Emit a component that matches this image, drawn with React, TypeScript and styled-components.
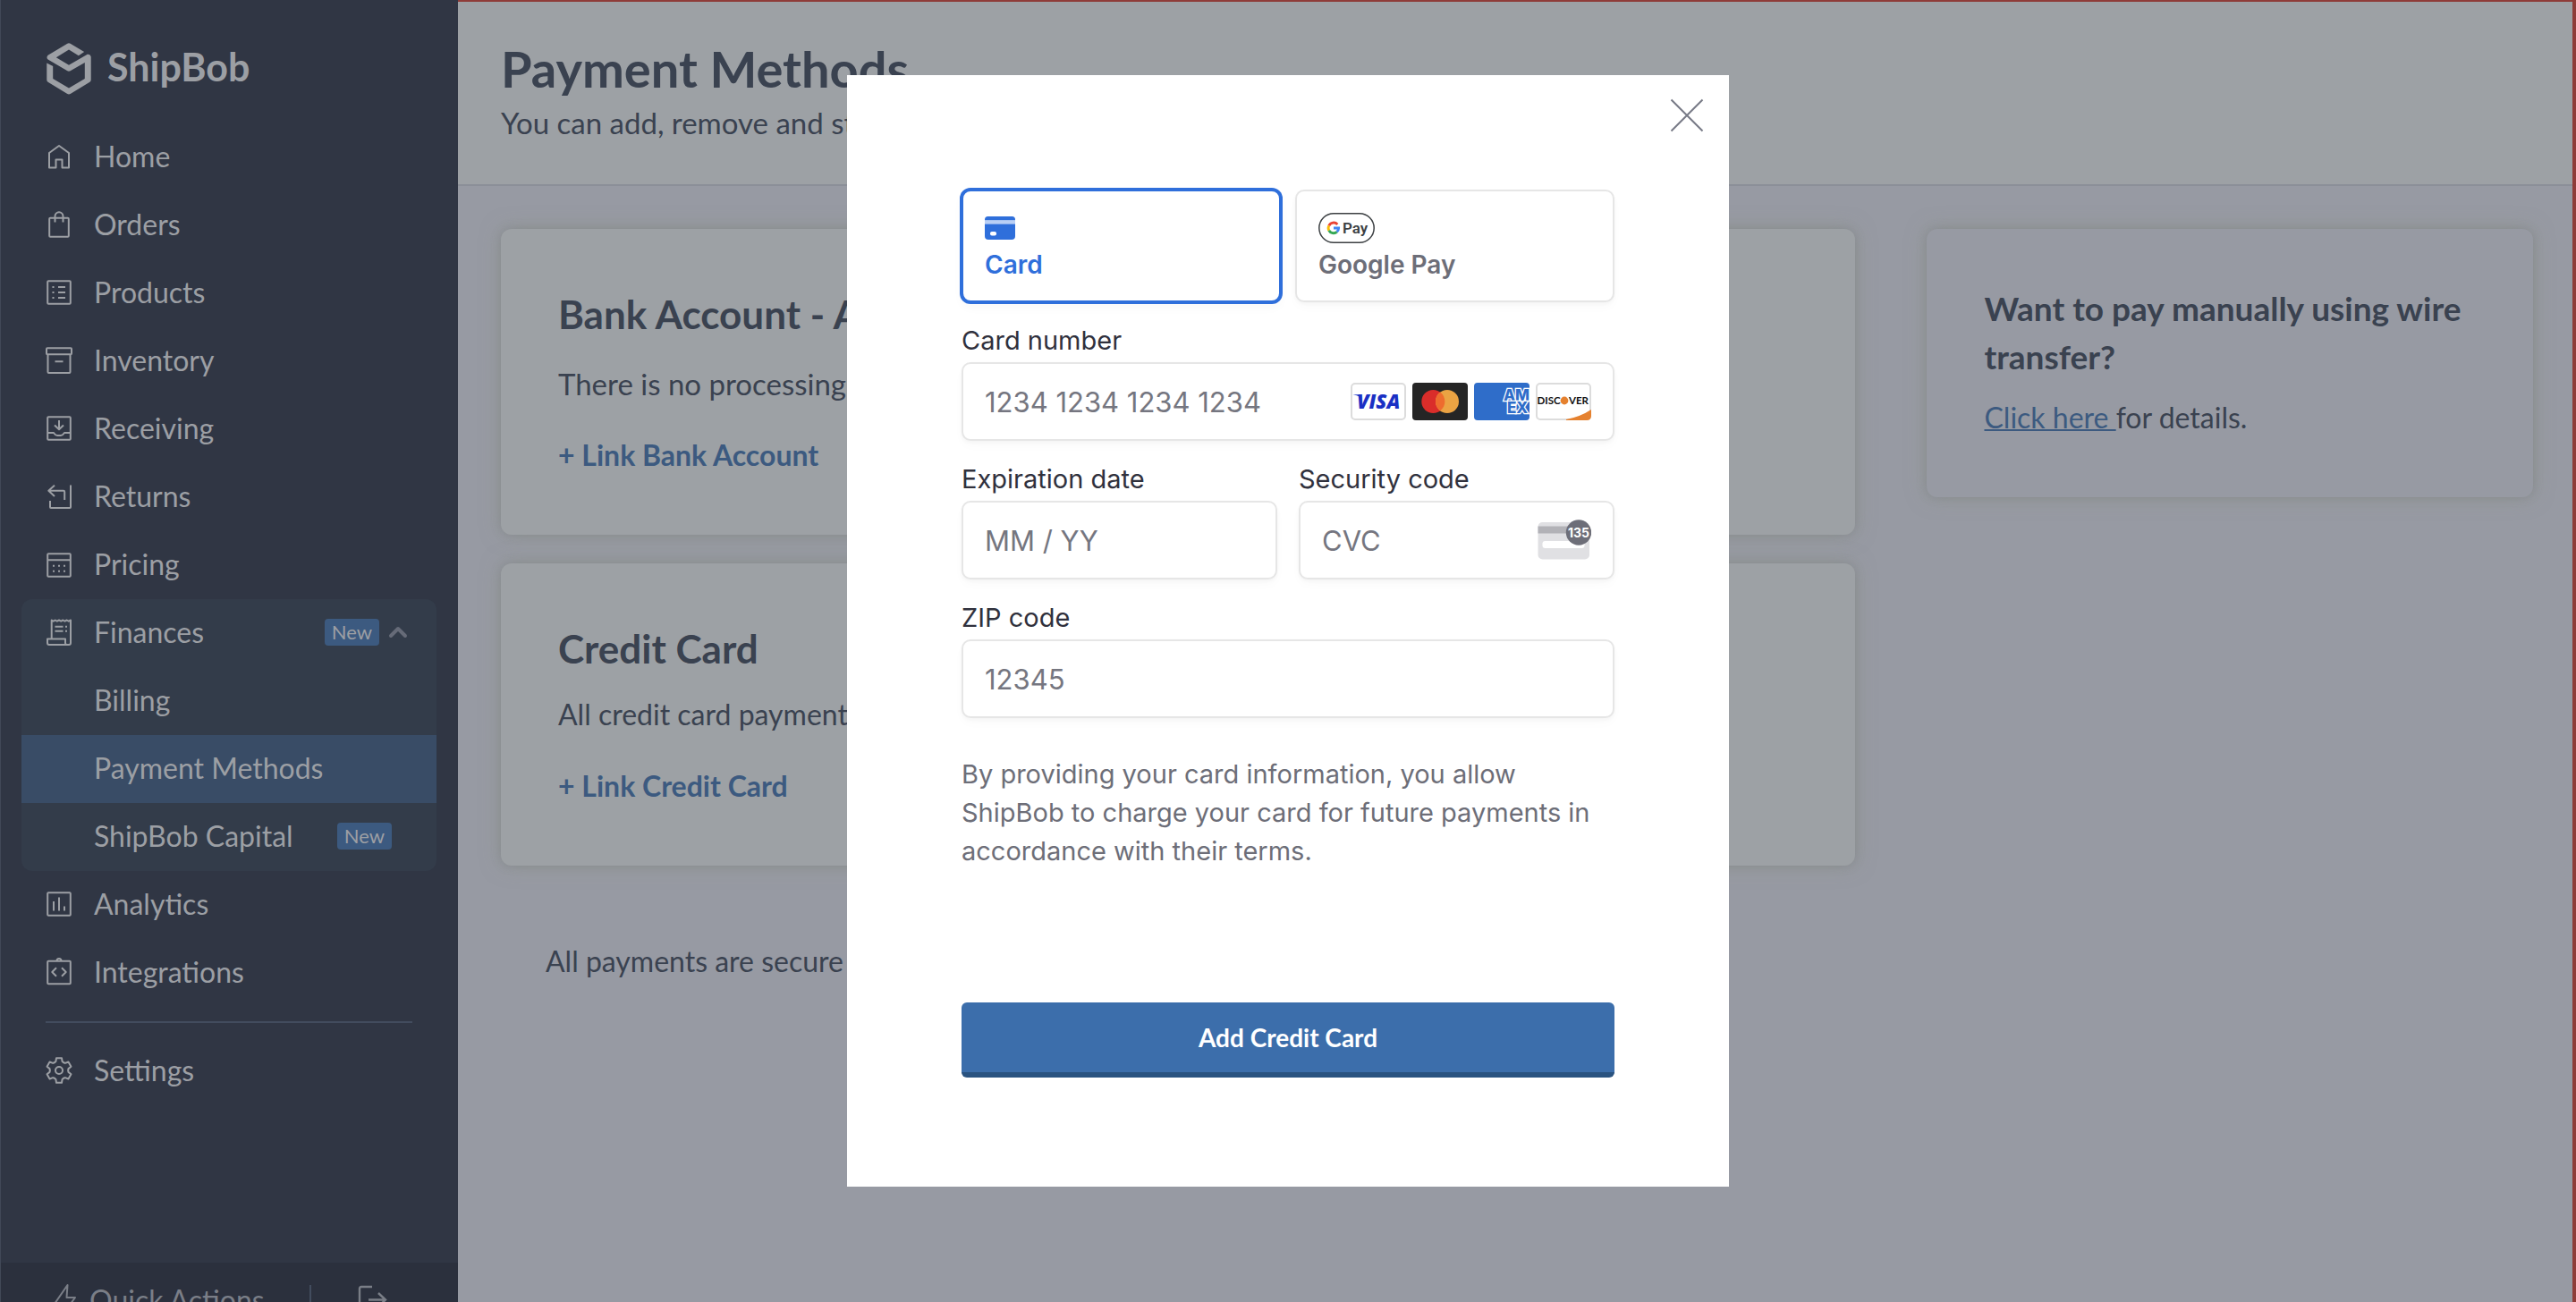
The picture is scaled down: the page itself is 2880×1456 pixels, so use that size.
import React from "react";
import styled, { createGlobalStyle, css } from "styled-components";

const brand = `Lato, "Open Sans", sans-serif`;
const form = `Inter, Roboto, sans-serif`;

const color = {
  nav: "#303644",
  navGroup: "#333c4a",
  navActive: "#394c66",
  navFooter: "#2b303d",
  navText: "#9c9fa4",
  navMuted: "#7a7e87",
  line: "#424c5e",
  page: "#979aa3",
  surface: "#9da1a5",
  ink: "#3a4250",
  link: "#3c5a80",
  alert: "#8f3c39",
};

const GlobalStyle = createGlobalStyle`
  *, *::before, *::after { box-sizing: border-box; }
  body { margin: 0; background: ${color.page}; font-family: ${brand}; }
  h1, h2, h3, p { margin: 0; padding: 0; }
  button, input { font-family: inherit; }
`;

/* ---------- shell ---------- */

const Shell = styled.div`
  display: flex;
  height: 100vh;
  overflow: hidden;
`;

const Sidebar = styled.aside`
  display: flex;
  flex-direction: column;
  flex: 0 0 512px;
  height: calc(100vh + 40px);
  background: ${color.nav};
  border-left: 1px solid #414857;
  color: ${color.navText};
`;

const Brand = styled.a`
  display: flex;
  align-items: center;
  gap: 18px;
  height: 138px;
  padding: 16px 51px 0;
  color: inherit;
  font-size: 43px;
  font-weight: 700;
  line-height: 50px;
  text-decoration: none;
`;

const BrandName = styled.span`
  padding-bottom: 4px;
`;

const Nav = styled.nav`
  flex: 1;
  padding: 0 24px 0 23px;
`;

const NavGroup = styled.div`
  border-radius: 12px;
  background: ${color.navGroup};
`;

const NavLink = styled.a<{ $active?: boolean; $sub?: boolean }>`
  display: flex;
  align-items: center;
  gap: 24px;
  height: 76px;
  padding: 0 32px 3px ${(p) => (p.$sub ? 81 : 27)}px;
  background: ${(p) => (p.$active ? color.navActive : "transparent")};
  color: inherit;
  font-size: 32px;
  text-decoration: none;
  svg { flex: none; }
`;

const Badge = styled.span<{ $inset?: boolean }>`
  margin-left: auto;
  margin-right: ${(p) => (p.$inset ? 18 : 0)}px;
  padding: 0 8px;
  border-radius: 4px;
  background: ${color.link};
  font-size: 22px;
  line-height: 30px;
`;

const Chevron = styled.svg`
  margin-left: -14px;
`;

const NavDivider = styled.hr`
  height: 2px;
  margin: 16px 27px;
  border: 0;
  background: ${color.line};
`;

const NavFooter = styled.div`
  display: flex;
  align-items: center;
  height: 84px;
  padding: 0 0 2px 58px;
  background: ${color.navFooter};
  color: ${color.navMuted};
`;

const FooterButton = styled.button`
  display: flex;
  align-items: center;
  gap: 13px;
  padding: 0;
  border: 0;
  background: none;
  color: inherit;
  font-size: 32px;
`;

const FooterSplit = styled.span`
  width: 2px;
  height: 32px;
  margin: 0 52px 0 50px;
  background: ${color.line};
`;

/* ---------- page ---------- */

const Main = styled.main`
  flex: 1;
  min-width: 0;
  border-top: 2px solid ${color.alert};
  border-right: 4px solid ${color.alert};
  background: ${color.page};
  color: ${color.ink};
`;

const PageHeader = styled.header`
  padding: 45px 48px 49px;
  border-bottom: 2px solid #8b8f98;
  background: ${color.surface};
`;

const PageTitle = styled.h1`
  font-size: 56px;
  font-weight: 700;
  line-height: 60px;
`;

const Lead = styled.p`
  margin-top: 10px;
  font-size: 33px;
  line-height: 40px;
`;

const Columns = styled.div`
  display: grid;
  grid-template-columns: 38fr 17fr;
  align-items: start;
  gap: 80px;
  padding: 48px 44px 48px 48px;
`;

const Stack = styled.div`
  display: flex;
  flex-direction: column;
  gap: 32px;
`;

const Panel = styled.section<{ $flat?: boolean }>`
  padding: ${(p) => (p.$flat ? 62 : 65)}px 64px 67px;
  border-radius: 12px;
  background: ${(p) => (p.$flat ? color.page : color.surface)};
  box-shadow: 0 0 12px rgba(90, 94, 104, 0.28), 0 0 22px rgba(150, 155, 140, 0.5);
`;

const PanelTitle = styled.h2<{ $gap: number }>`
  margin-bottom: ${(p) => p.$gap}px;
  font-size: 44px;
  line-height: 60px;
  white-space: nowrap;
`;

const SideTitle = styled.h3`
  margin-bottom: 19px;
  font-size: 37px;
  line-height: 54px;
`;

const Body = styled.p<{ $large?: boolean }>`
  font-size: ${(p) => (p.$large ? 33 : 32)}px;
  line-height: 44px;
`;

const LinkButton = styled.button`
  display: block;
  margin-top: 36px;
  padding: 0;
  border: 0;
  background: none;
  color: ${color.link};
  font-size: 32px;
  font-weight: 700;
  line-height: 44px;
`;

const Note = styled(Body)`
  padding: 53px 50px 0;
`;

const TextLink = styled.a`
  color: ${color.link};
  text-decoration: underline;
  text-decoration-thickness: 2px;
  white-space: pre;
`;

/* ---------- dialog ---------- */

const Scrim = styled.div`
  position: fixed;
  inset: 0;
  display: flex;
  justify-content: center;
  align-items: flex-start;
  padding-top: 84px;
`;

const Dialog = styled.div`
  position: relative;
  width: 986px;
  padding: 128px 128px 122px;
  background: #fff;
  font-family: ${form};
`;

const Close = styled.button`
  position: absolute;
  top: 24px;
  right: 26px;
  display: flex;
  padding: 0;
  border: 0;
  background: none;
`;

const Fields = styled.form`
  display: flex;
  flex-direction: column;
  gap: 24px;
`;

const Row = styled.div<{ $gap: number }>`
  display: grid;
  grid-template-columns: repeat(2, minmax(0, 1fr));
  gap: ${(p) => p.$gap}px;
`;

const boxed = css`
  border: 2px solid #e6e6e6;
  border-radius: 10px;
  background: #fff;
  box-shadow: 0 2px 4px rgba(0, 0, 0, 0.03), 0 6px 12px rgba(0, 0, 0, 0.02);
`;

const Method = styled.button<{ $on?: boolean }>`
  ${boxed}
  display: flex;
  flex-direction: column;
  align-items: flex-start;
  height: 126px;
  padding: 22px 24px;
  color: #6d6e78;
  font-size: 28px;
  font-weight: 600;
  line-height: 36px;
  ${(p) =>
    p.$on &&
    css`
      border-color: #2f6fdb;
      box-shadow: 0 0 0 2px #2f6fdb, 0 6px 12px rgba(0, 0, 0, 0.03);
      color: #2f6fdb;
    `}
`;

const MethodIcon = styled.span`
  display: flex;
  align-items: center;
  height: 38px;
  margin-bottom: 4px;
`;

const Field = styled.div`
  display: flex;
  flex-direction: column;
`;

const Label = styled.label`
  margin-bottom: 6px;
  color: #30313d;
  font-size: 29px;
  line-height: 37px;
`;

const Control = styled.div`
  ${boxed}
  display: flex;
  align-items: center;
  gap: 7px;
  height: 88px;
  padding: 0 24px;
  svg { flex: none; }
`;

const Input = styled.input`
  flex: 1;
  min-width: 0;
  padding: 0;
  border: 0;
  outline: 0;
  background: none;
  color: #30313d;
  font-size: 31px;
  &::placeholder { color: #757680; opacity: 1; }
`;

const Terms = styled.p`
  margin-top: 17px;
  color: #6d6e78;
  font-size: 29px;
  line-height: 43px;
`;

const Submit = styled.button`
  height: 84px;
  margin-top: 124px;
  padding: 0;
  border: 0;
  border-bottom: 6px solid #2a5380;
  border-radius: 6px;
  background: #3c6eab;
  color: #fff;
  font-family: ${brand};
  font-size: 28px;
  font-weight: 700;
`;

/* ---------- drawings ---------- */

const gearPath = (() => {
  const tooth: [number, number][] = [
    [-5.4, -8.6],
    [-3.6, -10],
    [-3, -13.8],
    [3, -13.8],
    [3.6, -10],
    [5.4, -8.6],
  ];
  const points: string[] = [];
  for (let i = 0; i < 6; i++) {
    const a = (i * Math.PI) / 3;
    tooth.forEach(([x, y]) => {
      const px = 15 + x * Math.cos(a) - y * Math.sin(a);
      const py = 15 + x * Math.sin(a) + y * Math.cos(a);
      points.push(`${px.toFixed(2)} ${py.toFixed(2)}`);
    });
  }
  return `M${points.join("L")}Z`;
})();

const icons: Record<string, React.ReactNode> = {
  home: <path d="M4 27.5V11L15 3l11 8v16.5h-7.5v-9h-7v9z" />,
  orders: (
    <>
      <rect x="4.2" y="7.7" width="21.6" height="21" rx="1" />
      <path d="M10.5 12.5V6a4.5 4.8 0 0 1 9 0v6.5" />
    </>
  ),
  products: (
    <>
      <rect x="2.2" y="2.2" width="25.6" height="25.6" rx="1" />
      <path d="M7.5 9h2M14 9h8M7.5 15h2M14 15h8M7.5 21h2M14 21h8" />
    </>
  ),
  inventory: (
    <>
      <rect x="1" y="1.2" width="28" height="7" rx="1" />
      <path d="M2.5 8.5V28q0 1 1 1h23q1 0 1-1V8.5M10.5 16.3h9" />
    </>
  ),
  receiving: (
    <>
      <rect x="2.2" y="2.2" width="25.6" height="25.6" rx="1" />
      <path d="M15 6v10M10 11.5l5 4.8 5-4.8M2.5 20h6.5q2 3 4 3h4q2 0 4-3h6.5" />
    </>
  ),
  returns: <path d="M10 2.8L3.3 8.7 10 15M3.5 8.7H20q1.2 0 1.2 1.2V19M28 2.5V27q0 1-1 1H6q-1 0-1-1v-7" />,
  pricing: (
    <>
      <rect x="2.2" y="3.2" width="25.6" height="25.6" rx="1" />
      <path d="M2.2 10.2h25.6M8 16.7h2M14 16.7h2M20 16.7h2M8 22.7h2M14 22.7h2M20 22.7h2" />
    </>
  ),
  finances: (
    <>
      <path d="M6.7 22V1.5l2 1.2 2-1.2 2.1 1.2 2.2-1.2 2.2 1.2 2.2-1.2 2.1 1.2 2.2-1.2 2 1.2L28 1.5V27q0 2-2 2H4q-2 0-2-2v-4.5h20V27q0 2 2 2" />
      <path d="M10.5 8.7h9M10.5 13.7h9M22 8.7h2M22 13.7h2" />
    </>
  ),
  analytics: (
    <>
      <rect x="2.2" y="2.2" width="25.6" height="25.6" rx="1" />
      <path d="M9 12v10.5M15 7.5v15M21 17.5v5" />
    </>
  ),
  integrations: (
    <>
      <rect x="2.2" y="2.8" width="25.6" height="25.4" rx="1" />
      <path d="M12 10.3L7.3 15l4.7 4.7M18 10.3l4.7 4.7-4.7 4.7M12.5 2.5a2.5 2.5 0 0 1 5 0" />
    </>
  ),
  settings: (
    <>
      <path d={gearPath} />
      <circle cx="15" cy="15" r="4" />
    </>
  ),
};

const NavIcon = ({ name }: { name: string }) => (
  <svg width="30" height="30" viewBox="0 0 30 30" fill="none" stroke="currentColor" strokeWidth="2" strokeLinejoin="round" overflow="visible" aria-hidden="true">
    {icons[name]}
  </svg>
);

const Logo = () => (
  <svg width="50" height="58" viewBox="156 143 150 176" fill="currentColor" aria-hidden="true">
    <path d="M283 173L236 145Q231 142 226 145L160 185Q153 192 160 199L226 238Q231 241 236 238L285 210V264L231 296L177 264V222L156 211V268Q156 273 160 276L226 316Q231 319 236 316L302 276Q306 273 306 268V190Q304 180 294 182L231 218L188 192L231 166L264 186Z" />
  </svg>
);

const CardGlyph = () => (
  <svg width="34" height="26" viewBox="0 0 34 26" aria-hidden="true">
    <path d="M3.5 0h27Q34 0 34 3.5V4.5H0V3.5Q0 0 3.5 0Z" fill="#2f6fdb" />
    <path d="M0 4.5h34v4H0z" fill="#b9cff5" />
    <path d="M0 8.5h34V22q0 4-4 4H4q-4 0-4-4Z" fill="#2f6fdb" />
    <rect x="6" y="17" width="7" height="4.4" rx="2" fill="#fff" />
  </svg>
);

const GooglePayGlyph = () => (
  <svg width="63" height="34" viewBox="0 0 63 34" aria-hidden="true">
    <rect x="0.8" y="0.8" width="61.4" height="32.4" rx="16.2" fill="#fff" stroke="#3c4043" strokeWidth="1.5" />
    <g fill="none" strokeWidth="2.9">
      <path d="M21.3 12.9A5.8 5.8 0 0 0 11.8 14.3" stroke="#ea4335" />
      <path d="M11.8 14.3a5.8 5.8 0 0 0 0 5.4" stroke="#fbbc04" />
      <path d="M11.8 19.7a5.8 5.8 0 0 0 8.9 1.6" stroke="#34a853" />
      <path d="M20.7 21.3A5.8 5.8 0 0 0 22.6 17H17" stroke="#4285f4" />
    </g>
    <text x="27" y="23" fontFamily="Roboto, sans-serif" fontSize="17" fill="#3c4043">Pay</text>
  </svg>
);

const Visa = () => (
  <svg width="62" height="42" viewBox="0 0 62 42" role="img" aria-label="Visa">
    <rect x="1" y="1" width="60" height="40" rx="4" fill="#fff" stroke="#dcdcdc" strokeWidth="2" />
    <path d="M2.5 13.3h7.5l1 3Q7 13.8 2.5 13.3Z" fill="#1a30c4" />
    <text x="7" y="29" fontFamily="Open Sans, sans-serif" fontWeight="800" fontStyle="italic" fontSize="22" fill="#1a30c4">VISA</text>
  </svg>
);

const Mastercard = () => (
  <svg width="62" height="42" viewBox="0 0 62 42" role="img" aria-label="Mastercard">
    <rect width="62" height="42" rx="4" fill="#252525" />
    <circle cx="23.3" cy="21" r="13" fill="#da2d2a" />
    <circle cx="39" cy="21" r="13" fill="#eba343" />
    <path d="M31.15 10.6a13 13 0 0 1 0 20.8a13 13 0 0 1 0-20.8Z" fill="#ee6c2e" />
  </svg>
);

const Amex = () => (
  <svg width="62" height="42" viewBox="0 0 62 42" role="img" aria-label="American Express">
    <defs>
      <clipPath id="amex"><rect width="62" height="42" rx="4" /></clipPath>
    </defs>
    <g clipPath="url(#amex)">
      <rect width="62" height="42" fill="#2f6dc9" />
      <g fontFamily="Inter, sans-serif" fontWeight="800" fontSize="17" fill="#2f6dc9" stroke="#fff" strokeWidth="2.6" paintOrder="stroke">
        <text x="33" y="20">AM</text>
        <text x="37" y="34">EX</text>
      </g>
    </g>
  </svg>
);

const Discover = () => (
  <svg width="62" height="42" viewBox="0 0 62 42" role="img" aria-label="Discover">
    <rect x="1" y="1" width="60" height="40" rx="4" fill="#fff" stroke="#dcdcdc" strokeWidth="2" />
    <path d="M34 41Q50 38 62 30V37q0 5-5 5H34Z" fill="#e5812f" />
    <g fontFamily="Lato, sans-serif" fontWeight="700" fontSize="11.5" fill="#111">
      <text x="1.5" y="24">DISC</text>
      <text x="37" y="24">VER</text>
    </g>
    <circle cx="32" cy="20" r="4.4" fill="#e5812f" />
  </svg>
);

const CvcGlyph = () => (
  <svg width="60" height="46" viewBox="0 0 60 46" aria-hidden="true">
    <rect x="0.5" y="3" width="57.5" height="41.5" rx="5" fill="#e0e0e3" />
    <rect x="0.5" y="7.5" width="57.5" height="8" fill="#b2b2b7" />
    <rect x="5.5" y="24" width="47" height="8" rx="3" fill="#fff" />
    <circle cx="46" cy="14.5" r="14.2" fill="#6d6e78" />
    <text x="46" y="20" textAnchor="middle" fontFamily="Inter, sans-serif" fontWeight="700" fontSize="14" fill="#fff">135</text>
  </svg>
);

/* ---------- composition ---------- */

const primary = [
  ["home", "Home"],
  ["orders", "Orders"],
  ["products", "Products"],
  ["inventory", "Inventory"],
  ["receiving", "Receiving"],
  ["returns", "Returns"],
  ["pricing", "Pricing"],
];

const NavItem = ({ icon, children }: { icon: string; children: React.ReactNode }) => (
  <NavLink href="#">
    <NavIcon name={icon} />
    {children}
  </NavLink>
);

const SideNav = () => (
  <Sidebar>
    <Brand href="#">
      <Logo />
      <BrandName>ShipBob</BrandName>
    </Brand>
    <Nav>
      {primary.map(([icon, text]) => (
        <NavItem key={icon} icon={icon}>{text}</NavItem>
      ))}
      <NavGroup>
        <NavItem icon="finances">
          Finances
          <Badge>New</Badge>
          <Chevron width="22" height="14" viewBox="0 0 22 14" fill="none" stroke="#666b78" strokeWidth="4" strokeLinecap="round" strokeLinejoin="round" aria-hidden="true">
            <path d="M3 11l8-8 8 8" />
          </Chevron>
        </NavItem>
        <NavLink href="#" $sub>Billing</NavLink>
        <NavLink href="#" $sub $active aria-current="page">Payment Methods</NavLink>
        <NavLink href="#" $sub>
          ShipBob Capital
          <Badge $inset>New</Badge>
        </NavLink>
      </NavGroup>
      <NavItem icon="analytics">Analytics</NavItem>
      <NavItem icon="integrations">Integrations</NavItem>
      <NavDivider />
      <NavItem icon="settings">Settings</NavItem>
    </Nav>
    <NavFooter>
      <FooterButton type="button">
        <svg width="28" height="36" viewBox="0 0 28 36" fill="none" stroke="currentColor" strokeWidth="2" strokeLinejoin="round" aria-hidden="true">
          <path d="M16.5 2L2 23h10l-1 12 14-19h-9.5z" />
        </svg>
        Quick Actions
      </FooterButton>
      <FooterSplit />
      <FooterButton type="button" aria-label="Log out">
        <svg width="34" height="32" viewBox="0 0 34 32" fill="none" stroke="currentColor" strokeWidth="2.4" aria-hidden="true">
          <path d="M16 2H4q-2 0-2 2v24q0 2 2 2h12M12 16.5h19M23 9l8 7.5-8 7.5" />
        </svg>
      </FooterButton>
    </NavFooter>
  </Sidebar>
);

const PaymentDialog = () => (
  <Scrim>
    <Dialog role="dialog" aria-modal="true" aria-label="Add credit card">
      <Close type="button" aria-label="Close">
        <svg width="42" height="42" viewBox="0 0 42 42" stroke="#777a86" strokeWidth="2" aria-hidden="true">
          <path d="M3.5 3.5l35 35M38.5 3.5l-35 35" />
        </svg>
      </Close>
      <Fields onSubmit={(e) => e.preventDefault()}>
        <Row $gap={16}>
          <Method type="button" $on aria-pressed="true">
            <MethodIcon><CardGlyph /></MethodIcon>
            Card
          </Method>
          <Method type="button" aria-pressed="false">
            <MethodIcon><GooglePayGlyph /></MethodIcon>
            Google Pay
          </Method>
        </Row>
        <Field>
          <Label htmlFor="number">Card number</Label>
          <Control>
            <Input id="number" inputMode="numeric" placeholder="1234 1234 1234 1234" />
            <Visa />
            <Mastercard />
            <Amex />
            <Discover />
          </Control>
        </Field>
        <Row $gap={24}>
          <Field>
            <Label htmlFor="expiry">Expiration date</Label>
            <Control>
              <Input id="expiry" placeholder="MM / YY" />
            </Control>
          </Field>
          <Field>
            <Label htmlFor="cvc">Security code</Label>
            <Control>
              <Input id="cvc" placeholder="CVC" />
              <CvcGlyph />
            </Control>
          </Field>
        </Row>
        <Field>
          <Label htmlFor="zip">ZIP code</Label>
          <Control>
            <Input id="zip" placeholder="12345" />
          </Control>
        </Field>
        <Terms>
          By providing your card information, you allow ShipBob to charge your card for future payments in
          accordance with their terms.
        </Terms>
        <Submit type="submit">Add Credit Card</Submit>
      </Fields>
    </Dialog>
  </Scrim>
);

export default function App() {
  return (
    <>
      <GlobalStyle />
      <Shell>
        <SideNav />
        <Main>
          <PageHeader>
            <PageTitle>Payment Methods</PageTitle>
            <Lead>You can add, remove and store payment methods.</Lead>
          </PageHeader>
          <Columns>
            <Stack>
              <Panel>
                <PanelTitle $gap={26}>Bank Account - ACH</PanelTitle>
                <Body $large>There is no processing fee.</Body>
                <LinkButton type="button">+ Link Bank Account</LinkButton>
              </Panel>
              <Panel>
                <PanelTitle $gap={22}>Credit Card</PanelTitle>
                <Body>All credit card payments have a fee.</Body>
                <LinkButton type="button">+ Link Credit Card</LinkButton>
              </Panel>
              <Note>All payments are secure and encrypted.</Note>
            </Stack>
            <Panel $flat>
              <SideTitle>Want to pay manually using wire transfer?</SideTitle>
              <Body>
                <TextLink href="#">Click here </TextLink>for details.
              </Body>
            </Panel>
          </Columns>
        </Main>
      </Shell>
      <PaymentDialog />
    </>
  );
}
